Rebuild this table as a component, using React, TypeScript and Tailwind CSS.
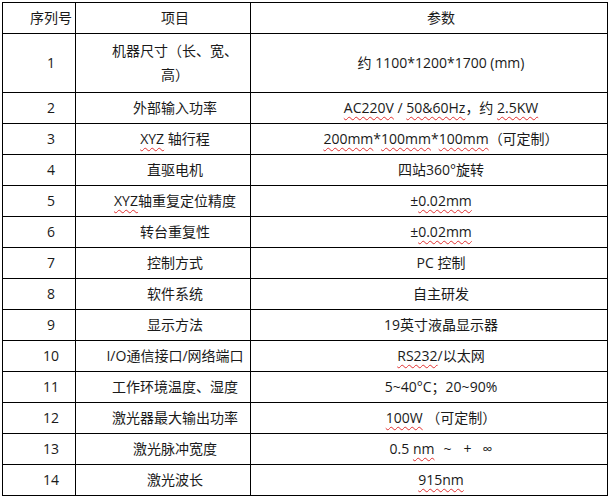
import type { ReactNode } from 'react';

const squiggle = 'underline decoration-wavy decoration-[#e03030] decoration-1 underline-offset-[3px]';

function W({ children }: { children: ReactNode }) {
  return <span className={squiggle}>{children}</span>;
}

interface Row {
  no: string;
  item: ReactNode;
  value: ReactNode;
  tall?: boolean;
}

const rows: Row[] = [
  {
    no: '1',
    item: (
      <>
        机器尺寸（长、宽、
        <br />
        高）
      </>
    ),
    value: '约 1100*1200*1700 (mm)',
    tall: true,
  },
  {
    no: '2',
    item: '外部输入功率',
    value: (
      <>
        <W>AC220V</W> / <W>50&amp;60Hz</W>，约 <W>2.5KW</W>
      </>
    ),
  },
  {
    no: '3',
    item: (
      <>
        <W>XYZ</W> 轴行程
      </>
    ),
    value: (
      <>
        <W>200mm</W>*<W>100mm</W>*<W>100mm</W>（可定制）
      </>
    ),
  },
  { no: '4', item: '直驱电机', value: '四站360°旋转' },
  {
    no: '5',
    item: (
      <>
        <W>XYZ</W>轴重复定位精度
      </>
    ),
    value: (
      <>
        ±<W>0.02mm</W>
      </>
    ),
  },
  {
    no: '6',
    item: '转台重复性',
    value: (
      <>
        ±<W>0.02mm</W>
      </>
    ),
  },
  { no: '7', item: '控制方式', value: 'PC 控制' },
  { no: '8', item: '软件系统', value: '自主研发' },
  { no: '9', item: '显示方法', value: '19英寸液晶显示器' },
  {
    no: '10',
    item: 'I/O通信接口/网络端口',
    value: (
      <>
        <W>RS232</W>/以太网
      </>
    ),
  },
  { no: '11', item: '工作环境温度、湿度', value: '5~40°C；20~90%' },
  {
    no: '12',
    item: '激光器最大输出功率',
    value: (
      <>
        <W>100W</W> （可定制）
      </>
    ),
  },
  {
    no: '13',
    item: '激光脉冲宽度',
    value: (
      <>
        0.5 <W>nm</W>
        <span className="ml-[9px]">~</span>
        <span className="ml-[12px]">+</span>
        <span className="ml-[11px]">∞</span>
      </>
    ),
  },
  {
    no: '14',
    item: '激光波长',
    value: <W>915nm</W>,
  },
];

function Cell({ children, tall }: { children: ReactNode; tall?: boolean }) {
  return (
    <div
      className={`flex items-center justify-center bg-white pl-6 text-center leading-[24px] whitespace-nowrap ${
        tall ? 'h-[58px]' : 'h-[30px]'
      }`}
    >
      <span>{children}</span>
    </div>
  );
}

export default function App() {
  return (
    <div className="min-h-screen bg-white pl-[2px] pt-[2px]">
      <div
        className="grid w-[606px] grid-cols-[72px_174px_356px] gap-px border border-black bg-black text-[14px] text-[#1a1a1a]"
        style={{ fontFamily: '"Open Sans", "Noto Sans CJK SC", sans-serif' }}
      >
        <Cell>序列号</Cell>
        <Cell>项目</Cell>
        <Cell>参数</Cell>
        {rows.map((r) => (
          <div key={r.no} className="contents">
            <Cell tall={r.tall}>{r.no}</Cell>
            <Cell tall={r.tall}>{r.item}</Cell>
            <Cell tall={r.tall}>{r.value}</Cell>
          </div>
        ))}
      </div>
    </div>
  );
}
